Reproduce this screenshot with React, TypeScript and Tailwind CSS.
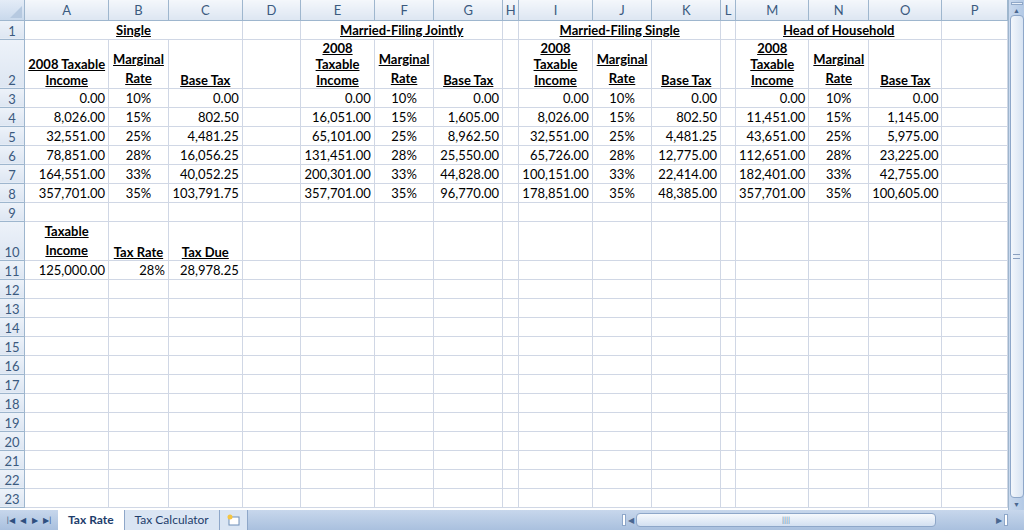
import React from "react";

const COLS = ["A", "B", "C", "D", "E", "F", "G", "H", "I", "J", "K", "L", "M", "N", "O", "P"];
const WIDTHS = [80, 60, 74, 65, 70, 60, 69, 17, 70, 60, 69, 16, 70, 60, 69, 73];

const RATES = ["10%", "15%", "25%", "28%", "33%", "35%"];
const DATA: string[][] = [
  ["0.00", "0.00", "0.00", "0.00", "0.00", "0.00", "0.00", "0.00"],
  ["8,026.00", "802.50", "16,051.00", "1,605.00", "8,026.00", "802.50", "11,451.00", "1,145.00"],
  ["32,551.00", "4,481.25", "65,101.00", "8,962.50", "32,551.00", "4,481.25", "43,651.00", "5,975.00"],
  ["78,851.00", "16,056.25", "131,451.00", "25,550.00", "65,726.00", "12,775.00", "112,651.00", "23,225.00"],
  ["164,551.00", "40,052.25", "200,301.00", "44,828.00", "100,151.00", "22,414.00", "182,401.00", "42,755.00"],
  ["357,701.00", "103,791.75", "357,701.00", "96,770.00", "178,851.00", "48,385.00", "357,701.00", "100,605.00"],
];

const cell = "border-r border-b border-[#d0d7e5] px-[3px] py-0 leading-[16px] whitespace-nowrap overflow-hidden";
const rowHead =
  "w-[26px] border-r border-b border-[#9eb6ce] bg-gradient-to-b from-[#edf2f9] to-[#dde6f2] text-[#3b5a7f] text-center align-bottom leading-[16px] p-0";

const Hdr = ({ lines, leading = "leading-[16px]" }: { lines: string[]; leading?: string }) => (
  <div className={`flex flex-col items-center font-bold underline ${leading}`}>
    {lines.map((l, i) => (
      <span key={i}>{l}</span>
    ))}
  </div>
);

const Empty = ({ from, to }: { from: number; to: number }) => (
  <>
    {WIDTHS.slice(from, to).map((_, i) => (
      <td key={i} className={cell} />
    ))}
  </>
);

const groupRow = (vals: string[], rate: string) => (
  <>
    <td className={`${cell} text-right`}>{vals[0]}</td>
    <td className={`${cell} text-center`}>{rate}</td>
    <td className={`${cell} text-right`}>{vals[1]}</td>
  </>
);

export default function App() {
  return (
    <div
      className="w-[1024px] h-[530px] overflow-hidden bg-white flex flex-col text-[13px] text-black"
      style={{ fontFamily: "Lato, 'Open Sans', sans-serif" }}
    >
      <div className="flex flex-1 min-h-0">
        <div className="w-[1008px] overflow-hidden">
          <table className="border-collapse table-fixed">
            <colgroup>
              <col style={{ width: 26 }} />
              {WIDTHS.map((w, i) => (
                <col key={i} style={{ width: w }} />
              ))}
            </colgroup>
            <tbody>
              <tr className="h-[20px]">
                <td className="border-r border-b border-[#9eb6ce] bg-gradient-to-b from-[#e4ecf7] to-[#c9d9ec] relative p-0">
                  <svg className="absolute right-[2px] bottom-[2px]" width="12" height="12">
                    <polygon points="12,0 12,12 0,12" fill="#b6c9e0" />
                  </svg>
                </td>
                {COLS.map((c) => (
                  <td
                    key={c}
                    className="border-r border-b border-[#9eb6ce] bg-gradient-to-b from-[#f4f7fb] to-[#dde6f2] text-center text-[#3b5a7f] leading-[16px] p-0"
                  >
                    {c}
                  </td>
                ))}
              </tr>
              <tr className="h-[19px]">
                <td className={rowHead}>1</td>
                <td colSpan={3} className={`${cell} text-center font-bold underline`}>Single</td>
                <Empty from={3} to={4} />
                <td colSpan={3} className={`${cell} text-center font-bold underline`}>Married-Filing Jointly</td>
                <Empty from={7} to={8} />
                <td colSpan={3} className={`${cell} text-center font-bold underline`}>Married-Filing Single</td>
                <Empty from={11} to={12} />
                <td colSpan={3} className={`${cell} text-center font-bold underline`}>Head of Household</td>
                <Empty from={15} to={16} />
              </tr>
              <tr className="h-[48px]">
                <td className={rowHead}>2</td>
                <td className={`${cell} align-bottom`}><Hdr lines={["2008 Taxable", "Income"]} /></td>
                <td className={`${cell} align-bottom`}><Hdr lines={["Marginal", "Rate"]} leading="leading-[19px]" /></td>
                <td className={`${cell} align-bottom`}><Hdr lines={["Base Tax"]} /></td>
                <Empty from={3} to={4} />
                {[0, 1, 2].map((g) => (
                  <React.Fragment key={g}>
                    <td className={`${cell} align-bottom`}><Hdr lines={["2008", "Taxable", "Income"]} /></td>
                    <td className={`${cell} align-bottom`}><Hdr lines={["Marginal", "Rate"]} leading="leading-[19px]" /></td>
                    <td className={`${cell} align-bottom`}><Hdr lines={["Base Tax"]} /></td>
                    <td className={cell} />
                  </React.Fragment>
                ))}
              </tr>
              {DATA.map((r, i) => (
                <tr key={i} className="h-[19px]">
                  <td className={rowHead}>{i + 3}</td>
                  {groupRow([r[0], r[1]], RATES[i])}
                  <td className={cell} />
                  {groupRow([r[2], r[3]], RATES[i])}
                  <td className={cell} />
                  {groupRow([r[4], r[5]], RATES[i])}
                  <td className={cell} />
                  {groupRow([r[6], r[7]], RATES[i])}
                  <td className={cell} />
                </tr>
              ))}
              <tr className="h-[19px]">
                <td className={rowHead}>9</td>
                <Empty from={0} to={16} />
              </tr>
              <tr className="h-[39px]">
                <td className={rowHead}>10</td>
                <td className={`${cell} align-bottom`}><Hdr lines={["Taxable", "Income"]} leading="leading-[19px]" /></td>
                <td className={`${cell} align-bottom`}><Hdr lines={["Tax Rate"]} /></td>
                <td className={`${cell} align-bottom`}><Hdr lines={["Tax Due"]} /></td>
                <Empty from={3} to={16} />
              </tr>
              <tr className="h-[19px]">
                <td className={rowHead}>11</td>
                <td className={`${cell} text-right`}>125,000.00</td>
                <td className={`${cell} text-right`}>28%</td>
                <td className={`${cell} text-right`}>28,978.25</td>
                <Empty from={3} to={16} />
              </tr>
              {Array.from({ length: 12 }, (_, i) => (
                <tr key={i} className="h-[19px]">
                  <td className={rowHead}>{i + 12}</td>
                  <Empty from={0} to={16} />
                </tr>
              ))}
            </tbody>
          </table>
        </div>
        <div className="w-[16px] bg-gradient-to-r from-[#c9d9ee] to-[#b3c9e5] flex flex-col items-center border-l border-[#9eb6ce]">
          <div className="w-[12px] h-[3px] mt-[2px] bg-[#e9f0f9] border border-[#90a8c8]" />
          <div className="text-[7px] text-[#4a6790] leading-[10px]">▲</div>
          <div className="w-[14px] flex-1 rounded-sm border border-[#8ea7c9] bg-gradient-to-r from-[#f3f7fc] to-[#d7e3f2] flex items-center justify-center">
            <div className="w-[7px] h-[5px] border-t border-b border-[#8aa0c0]" />
          </div>
          <div className="text-[7px] text-[#4a6790] leading-[12px]">▼</div>
        </div>
      </div>
      <div className="h-[20px] shrink-0 flex bg-gradient-to-b from-[#c7d7ec] to-[#a9c0de] text-[12px]">
        <div className="w-[58px] flex items-center justify-around px-1 text-[#2f4f7f] text-[8px]">
          <span>|◀</span><span>◀</span><span>▶</span><span>▶|</span>
        </div>
        <div className="px-[10px] bg-white font-bold text-[#1e3d6b] flex items-center border-r border-[#8ea7c9]">Tax Rate</div>
        <div className="px-[10px] bg-[#dae5f3] text-[#1e3d6b] flex items-center border-r border-[#8ea7c9]">Tax Calculator</div>
        <div className="w-[28px] bg-[#dae5f3] flex items-center justify-center border-r border-[#8ea7c9]">
          <svg width="14" height="12"><rect x="3" y="3" width="10" height="8" fill="#fff" stroke="#6f8fb8" /><circle cx="4" cy="3" r="2.5" fill="#f5c542" /></svg>
        </div>
        <div className="flex-1" />
        <div className="w-[402px] flex items-center gap-[2px] pr-[16px]">
          <div className="w-[4px] h-[12px] border border-[#8ea7c9] bg-white" />
          <span className="text-[8px] text-[#4a6790]">◀</span>
          <div className="flex-1 h-[14px] rounded-sm border border-[#8ea7c9] bg-gradient-to-b from-[#f6f9fd] to-[#d3e0f1] flex items-center justify-center text-[8px] text-[#6a84a8]">||||</div>
          <div className="w-[56px]" />
          <span className="text-[8px] text-[#4a6790]">▶</span>
          <div className="w-[4px] h-[12px] border border-[#8ea7c9] bg-white" />
        </div>
      </div>
    </div>
  );
}
